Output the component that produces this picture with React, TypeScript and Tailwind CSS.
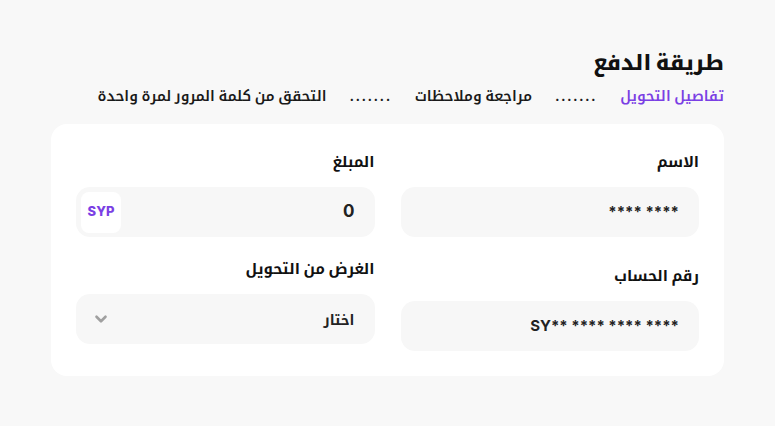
import React from 'react';
import { ChevronDown } from 'lucide-react';

const font = { fontFamily: 'Inter, "Noto Kufi Arabic", "Noto Sans Arabic", sans-serif' };

function Field({ label, children, className = '' }: { label: string; children: React.ReactNode; className?: string }) {
  return (
    <div className={className}>
      <div className="text-[15px] font-bold leading-6 text-[#111] mb-[13px]">{label}</div>
      {children}
    </div>
  );
}

export default function App() {
  return (
    <div dir="rtl" style={font} className="min-h-screen w-full bg-[#f8f8f8] px-[51px] pt-[47px]">
      <h1 className="text-[21px] font-extrabold leading-8 text-[#111]">طريقة الدفع</h1>
      <div className="mt-[5px] flex items-center gap-[23px] text-[14.5px] font-semibold leading-6 text-[#1a1a1a]">
        <span className="text-[#7b3fe4]">تفاصيل التحويل</span>
        <span className="tracking-[1.4px]">.......</span>
        <span>مراجعة وملاحظات</span>
        <span className="tracking-[1.4px]">.......</span>
        <span>التحقق من كلمة المرور لمرة واحدة</span>
      </div>
      <div className="mt-[16px] grid grid-cols-2 gap-x-[26px] rounded-2xl bg-white px-[25px] pt-[26px] pb-[25px]">
        <div className="flex flex-col">
          <Field label="الاسم">
            <div className="flex h-[50px] items-center rounded-[14px] bg-[#f7f7f7] px-5 text-[15px] font-bold text-[#222]">
              **** ****
            </div>
          </Field>
          <Field label="رقم الحساب" className="mt-[27px]">
            <div className="flex h-[50px] items-center rounded-[14px] bg-[#f7f7f7] px-5 text-[15px] font-bold text-[#222]">
              <span dir="ltr">SY** **** **** ****</span>
            </div>
          </Field>
        </div>
        <div className="flex flex-col">
          <Field label="المبلغ">
            <div className="flex h-[50px] items-center justify-between rounded-[14px] bg-[#f7f7f7] pr-5 pl-[5px] text-[17px] font-bold text-[#222]">
              <span>0</span>
              <div className="flex h-[41px] w-[40px] items-center justify-center rounded-[8px] bg-white text-[13px] font-extrabold text-[#7b3fe4]">
                SYP
              </div>
            </div>
          </Field>
          <Field label="الغرض من التحويل" className="mt-[20px]">
            <div className="flex h-[50px] items-center justify-between rounded-[14px] bg-[#f7f7f7] pr-5 pl-[16px] text-[14px] font-bold text-[#222]">
              <span>اختار</span>
              <ChevronDown size={18} strokeWidth={3.5} className="text-[#a0a0a0]" />
            </div>
          </Field>
        </div>
      </div>
    </div>
  );
}
